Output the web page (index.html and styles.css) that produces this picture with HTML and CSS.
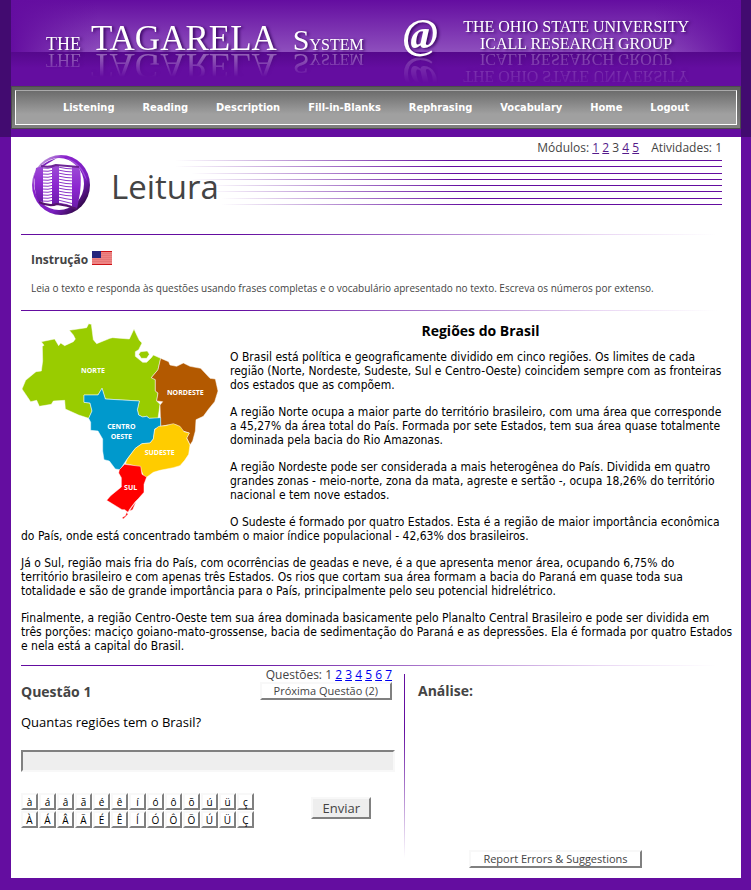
FILE: index.html
```html
<!DOCTYPE html>
<html lang="pt-BR">
<head>
<meta charset="utf-8">
<title>The Tagarela System - Leitura</title>
<link rel="stylesheet" href="styles.css">
</head>
<body>
<div class="top">
  <header class="banner">
    <div class="brand reflect"><span class="brand-the">THE</span><span class="brand-name">TAGARELA</span><span class="brand-system">S<small>YSTEM</small></span></div>
    <div class="at">@</div>
    <div class="group reflect">THE OHIO STATE UNIVERSITY<br>ICALL RESEARCH GROUP</div>
  </header>
  <nav class="menu">
    <div class="menu-inner">
      <a href="#">Listening</a>
      <a href="#">Reading</a>
      <a href="#">Description</a>
      <a href="#">Fill-in-Blanks</a>
      <a href="#">Rephrasing</a>
      <a href="#">Vocabulary</a>
      <a href="#">Home</a>
      <a href="#">Logout</a>
    </div>
  </nav>
</div>

<main class="page">
  <div class="modules">
    <span>Módulos: <a href="#">1</a> <a href="#">2</a> 3 <a href="#">4</a> <a href="#">5</a></span>
    <span>Atividades: 1</span>
  </div>

  <div class="heading">
    <svg class="book" viewBox="0 0 60 62" aria-hidden="true">
      <defs>
        <linearGradient id="ring" x1="0" y1="0" x2="1" y2="1">
          <stop offset="0" stop-color="#6a1fa8"/><stop offset=".15" stop-color="#b78ad8"/>
          <stop offset=".3" stop-color="#8a22cc"/><stop offset=".65" stop-color="#7a1fc0"/>
          <stop offset=".85" stop-color="#35084f"/><stop offset="1" stop-color="#7d3bb0"/>
        </linearGradient>
        <linearGradient id="cover" x1="0" y1="0" x2="0" y2="1">
          <stop offset="0" stop-color="#9d4ad6"/><stop offset=".5" stop-color="#8c26d0"/><stop offset="1" stop-color="#6a1aa8"/>
        </linearGradient>
      </defs>
      <ellipse cx="30" cy="30" rx="29" ry="30" fill="url(#ring)"/>
      <ellipse cx="28" cy="29" rx="25" ry="26" fill="#fff"/>
      <path d="M3 22Q8 8 26 3L16 9Q8 13 6 30Z" fill="#7d22bd"/>
      <path d="M36 3Q52 9 56 26L50 15Q44 9 36 3Z" fill="#a24fda"/>
      <g fill="none" stroke="#8c35c9" stroke-width="1">
        <path d="M11 13Q17 14 23 12M11 16Q17 17 23 15M11 19Q17 20 23 18M11 22Q17 23 23 21M11 25Q17 26 23 24M11 28Q17 29 23 27M11 31Q17 32 23 30M11 34Q17 35 23 33M11 37Q17 38 23 36M11 40Q17 41 23 39M11 43Q17 44 23 42M11 46Q17 47 23 45"/>
        <path d="M27 12Q35 14 43 14M27 15Q35 17 43 17M27 18Q35 20 43 20M27 21Q35 23 43 23M27 24Q35 26 43 26M27 27Q35 29 43 29M27 30Q35 32 43 32M27 33Q35 35 43 35M27 36Q35 38 43 38M27 39Q35 41 43 41M27 42Q35 44 43 45M27 45Q35 47 43 49M27 48Q35 49 43 52"/>
      </g>
      <path d="M5 13L12 11V47L7 46Q1 32 5 13Z" fill="url(#cover)"/>
      <path d="M21 11H28V49L21 50Z" fill="url(#cover)"/>
      <path d="M41 12H48Q51 20 49 38L46 54L41 51Z" fill="url(#cover)"/>
      <path d="M10 11Q18 13 25 10Q36 11 48 12" fill="none" stroke="#6d2496" stroke-width="2"/>
      <path d="M8 47Q18 52 26 49Q36 50 46 54" fill="none" stroke="#55146f" stroke-width="2"/>
    </svg>
    <h1>Leitura</h1>
    <div class="staff" aria-hidden="true"><i></i><i></i><i></i><i></i><i></i><i></i><i></i><i></i></div>
  </div>

  <hr>
  <section class="instruction">
    <h2>Instrução
      <svg class="flag" viewBox="0 0 20 14" role="img" aria-label="English">
        <rect width="20" height="14" fill="#ee8484"/>
        <path d="M0 2.500H20M0 4.500H20M0 6.500H20M0 8.500H20M0 10.500H20" stroke="#e57777" stroke-width="1"/>
        <path d="M0 .5H20M0 13.500H20" stroke="#cc1417"/>
        <rect width="9" height="7" fill="#24247c"/>
      </svg>
    </h2>
    <p>Leia o texto e responda às questões usando frases completas e o vocabulário apresentado no texto. Escreva os números por extenso.</p>
  </section>
  <hr>

  <article class="reading">
    <svg class="map" viewBox="33 30 600 600" role="img" aria-label="Mapa das regiões do Brasil">
      <g stroke="#fff" stroke-opacity=".75" stroke-width="2" stroke-linejoin="round">
        <path fill="#9c0" d="M36 234L47 208L78 182L94 180L98 150L97 106L102 103L94 92L134 84L146 104L152 96L164 104L190 92L196 84L190 72L178 58L230 50L236 38L244 40L250 86L260 98L300 82L308 80L358 84L372 54L382 76L388 88L396 96L386 116L376 122L376 136L398 154L410 154L424 140L430 132L452 142L444 176L424 200L436 206L436 240L444 246L440 270L450 280L444 322L418 322L410 316L398 318L386 312L382 296L388 270L286 264L276 232L264 252L222 252V274L240 276L246 300L236 322L206 312L166 294L164 268L130 270L124 280L88 286L80 268L62 272Z"/>
        <path fill="#9c0" d="M386 130L392 122L412 120L418 130L410 142H394Z"/>
        <path fill="#b35900" d="M452 142L476 152L480 162L500 166L520 156L540 166L572 172L600 202L616 204L624 240L614 272L596 294L580 316L558 326L556 360L548 390L540 402L530 380L538 366L512 358L500 342L474 342L452 346L450 282L458 272L440 270L444 246L436 240V206L424 200L444 176Z"/>
        <path fill="#09c" d="M276 232L286 264L388 270L382 296L386 312L398 318L410 316L418 322L452 320V346L434 354L430 384L420 396L396 398L376 412L350 446L330 476L316 474L298 450L282 446L278 420V384L264 360L242 358V334L236 322L246 300L240 276L222 274V252H264Z"/>
        <path fill="#fc0" d="M434 356L446 346L466 344L490 338L510 346L522 362L538 366L530 382L540 402L536 430L524 448L510 464L490 470L450 478L430 484L408 500L400 494L390 468L346 458L352 444L376 412L396 398L420 396L430 384Z"/>
        <path fill="red" d="M328 476L344 460L392 466L396 490L410 498L402 520V544L386 562L376 572L358 596L354 604L344 596L336 596L290 568L302 554L334 528V500L326 486Z"/>
        <path fill="red" d="M378 572L368 596L358 600L366 588ZM350 604L354 610L340 624L336 620L346 614Z"/>
      </g>
      <g class="map-labels">
        <text x="249" y="185">NORTE</text>
        <text x="526" y="253">NORDESTE</text>
        <text x="334" y="353">CENTRO</text>
        <text x="334" y="384">OESTE</text>
        <text x="449" y="431">SUDESTE</text>
        <text x="362" y="538">SUL</text>
      </g>
    </svg>
    <h2>Regiões do Brasil</h2>
    <p>O Brasil está política e geograficamente dividido em cinco regiões. Os limites de cada<br>região (Norte, Nordeste, Sudeste, Sul e Centro-Oeste) coincidem sempre com as fronteiras<br>dos estados que as compõem.</p>
    <p>A região Norte ocupa a maior parte do território brasileiro, com uma área que corresponde<br>a 45,27% da área total do País. Formada por sete Estados, tem sua área quase totalmente<br>dominada pela bacia do Rio Amazonas.</p>
    <p>A região Nordeste pode ser considerada a mais heterogênea do País. Dividida em quatro<br>grandes zonas - meio-norte, zona da mata, agreste e sertão -, ocupa 18,26% do território<br>nacional e tem nove estados.</p>
    <p>O Sudeste é formado por quatro Estados. Esta é a região de maior importância econômica<br>do País, onde está concentrado também o maior índice populacional - 42,63% dos brasileiros.</p>
    <p>Já o Sul, região mais fria do País, com ocorrências de geadas e neve, é a que apresenta menor área, ocupando 6,75% do<br>território brasileiro e com apenas três Estados. Os rios que cortam sua área formam a bacia do Paraná em quase toda sua<br>totalidade e são de grande importância para o País, principalmente pelo seu potencial hidrelétrico.</p>
    <p>Finalmente, a região Centro-Oeste tem sua área dominada basicamente pelo Planalto Central Brasileiro e pode ser dividida em<br>três porções: maciço goiano-mato-grossense, bacia de sedimentação do Paraná e as depressões. Ela é formada por quatro Estados<br>e nela está a capital do Brasil.</p>
  </article>
  <hr>

  <div class="work">
    <form class="question">
      <div class="question-head">
        <h2>Questão 1</h2>
        <div class="pager">
          <div>Questões: 1 <a href="#">2</a> <a href="#">3</a> <a href="#">4</a> <a href="#">5</a> <a href="#">6</a> <a href="#">7</a></div>
          <button type="button" class="btn">Próxima Questão (2)</button>
        </div>
      </div>
      <label for="answer">Quantas regiões tem o Brasil?</label>
      <input id="answer" type="text" class="answer">
      <div class="entry">
        <div class="keys">
          <button type="button">à</button><button type="button">á</button><button type="button">â</button><button type="button">ã</button><button type="button">é</button><button type="button">ê</button><button type="button">í</button><button type="button">ó</button><button type="button">ô</button><button type="button">õ</button><button type="button">ú</button><button type="button">ü</button><button type="button">ç</button>
          <button type="button">À</button><button type="button">Á</button><button type="button">Â</button><button type="button">Ã</button><button type="button">É</button><button type="button">Ê</button><button type="button">Í</button><button type="button">Ó</button><button type="button">Ô</button><button type="button">Õ</button><button type="button">Ú</button><button type="button">Ü</button><button type="button">Ç</button>
        </div>
        <button type="submit" class="btn send">Enviar</button>
      </div>
    </form>
    <div class="divider"></div>
    <section class="analysis">
      <h2>Análise:</h2>
      <button type="button" class="btn">Report Errors &amp; Suggestions</button>
    </section>
  </div>
</main>
</body>
</html>
```
FILE: styles.css
```css
* { box-sizing: border-box; }

body {
  margin: 0;
  background: #640da0;
  color: #000;
  font: 12px/14px "Open Sans", "Noto Sans", sans-serif;
}

h1, h2, p { margin: 0; }

/* Banner */
.top {
  padding-bottom: 8px;
  border: solid #420b70;
  border-width: 0 10px 0 11px;
}

.banner {
  display: flex;
  height: 86px;
  padding: 0 52px 0 35px;
  justify-content: space-between;
  color: #fff;
  font-family: "Liberation Serif", serif;
  background:
    linear-gradient(90deg, #640da0 0, transparent 12%, transparent 88%, #640da0 100%) 0 0 / 100% 52px no-repeat,
    linear-gradient(#640da0 0, #8e4fbd 52px, #55088c 52px, #640da0 68px);
}

.brand, .group, .at { text-shadow: 2px 1px 3px #3b0763; white-space: nowrap; }

.brand {
  display: flex;
  height: 60px;
  align-items: baseline;
  line-height: 60px;
  padding-top: 2px;
}
.brand-the { font-size: 18px; margin-right: 10px; }
.brand-name { font-size: 35px; margin-right: 16px; line-height: 74px; }
.brand-system { font-size: 30px; }
.brand-system small { font-size: 16px; }

.brand.reflect { -webkit-box-reflect: below -16px linear-gradient(transparent 45%, rgba(255, 255, 255, .35) 80%); }

.at {
  height: 62px;
  margin-left: 14px;
  font: bold italic 42px/68px "Liberation Serif", serif;
  -webkit-box-reflect: below -10px linear-gradient(transparent 50%, rgba(255, 255, 255, .25) 100%);
}

.group {
  height: 53px;
  padding-top: 18px;
  font-size: 16px;
  line-height: 17px;
  text-align: center;
}
.group.reflect { -webkit-box-reflect: below -3px linear-gradient(transparent 20%, rgba(255, 255, 255, .3) 100%); }

/* Main menu */
.menu {
  padding: 3px;
  border: 1px solid #4c4c4c;
  background: linear-gradient(#5d5d5d, #808080);
}
.menu-inner {
  display: flex;
  justify-content: center;
  gap: 28px;
  padding: 10px 0 9px;
  border: 1px solid #fff;
  border-top-color: #aaa;
  background: linear-gradient(#6c6c6c, #a0a0a0 70%);
}
.menu-inner a {
  color: #fff;
  font-family: "DejaVu Sans Condensed", "DejaVu Sans", sans-serif;
  font-size: 11px;
  font-weight: 700;
  text-decoration: none;
}

/* Page */
.page {
  margin: 0 10px 12px 11px;
  padding: 4px 10px 20px;
  background: #fff;
}

hr {
  height: 1px;
  margin: 0;
  border: 0;
  background: linear-gradient(90deg, #640da0 30%, #ead8f4 82%, #fff 98%);
}

.modules {
  display: flex;
  justify-content: flex-end;
  gap: 12px;
  padding-right: 9px;
  color: #444;
}
.modules a { color: #551a8b; }

.heading {
  display: grid;
  grid-template-columns: 60px 1fr;
  column-gap: 20px;
  padding: 0 9px 15px 10px;
}
.heading > * { grid-row: 1; }
.book { grid-column: 1; width: 60px; height: 62px; }
h1 {
  z-index: 1;
  grid-column: 2;
  color: #444;
  font-size: 33px;
  font-weight: 400;
  line-height: 64px;
}
.staff {
  grid-column: 2;
  display: grid;
  align-content: start;
  gap: 5px;
  padding: 5px 0 0 64px;
}
.staff i { height: 1px; background: linear-gradient(90deg, #fff, #640da0 50%); }
.staff i:nth-child(n+3) { margin-left: 16px; }
.staff i:nth-child(n+5) { margin-left: 32px; }
.staff i:nth-child(n+7) { margin-left: 46px; }
.staff i:nth-child(4n+3) { margin-top: 1px; }

.instruction { padding: 15px 10px; color: #444; }
.instruction h2 { font-size: 12px; line-height: 20px; margin-bottom: 11px; }
.instruction p { font-size: 10px; }
.flag { width: 20px; height: 14px; margin-left: 1px; vertical-align: -1px; }

.reading {
  margin-right: -8px;
  padding: 10px 0 12px;
  font-family: "DejaVu Sans Condensed", "DejaVu Sans", sans-serif;
}
.map { float: left; width: 200px; height: 200px; margin: 0 9px 0 0; }
.map-labels { fill: #fff; font: bold 21px "Open Sans", sans-serif; text-anchor: middle; }
.reading h2 {
  margin-bottom: 9px;
  padding-right: 8px;
  font: bold 14px/20px "Open Sans", "Noto Sans", sans-serif;
  text-align: center;
}
.reading p + p { margin-top: 13px; }

/* Question and analysis */
.work { display: grid; grid-template-columns: 383fr 1px 326fr; }
.work h2 { color: #444; font-size: 14px; line-height: 20px; }

.question { padding: 1px 9px 0 0; }
.question-head {
  display: flex;
  justify-content: space-between;
  padding-right: 3px;
}
.question-head h2 { padding-top: 15px; }
.pager { color: #444; text-align: right; }
.pager div { line-height: 15px; }
.pager a { color: #00e; }
.question label { display: block; margin-top: 10px; font-size: 13px; line-height: 20px; }

.btn, .keys button, .answer {
  margin: 0;
  border: 2px solid;
  border-color: #f8f8f8 #808080 #808080 #f8f8f8;
  border-radius: 0;
  background: #fff;
  color: #444;
  font: 11px/14px "Open Sans", "Noto Sans", sans-serif;
}
.btn { padding: 0 12px; }

.answer {
  display: block;
  width: 100%;
  height: 22px;
  margin-top: 18px;
  padding: 0 4px;
  border-color: #808080 #f8f8f8 #f8f8f8 #808080;
  background: #eee;
}

.entry {
  display: flex;
  justify-content: space-between;
  align-items: flex-start;
  margin-top: 21px;
  padding-right: 24px;
}
.keys { display: grid; grid-template-columns: repeat(13, 17px); gap: 1px; }
.keys button { height: 17px; padding: 0; color: #000; font-size: 10px; line-height: 12px; }
.send { margin-top: 4px; padding: 0 9px; background: #eee; font-size: 13px; line-height: 18px; }

.divider { height: 184px; margin-top: 8px; background: linear-gradient(#640da0 30%, #fff); }

.analysis {
  display: flex;
  flex-direction: column;
  align-items: flex-start;
  justify-content: space-between;
  margin-bottom: -10px;
  padding: 15px 0 0 13px;
}
.analysis .btn { align-self: center; margin-right: 38px; }
```
